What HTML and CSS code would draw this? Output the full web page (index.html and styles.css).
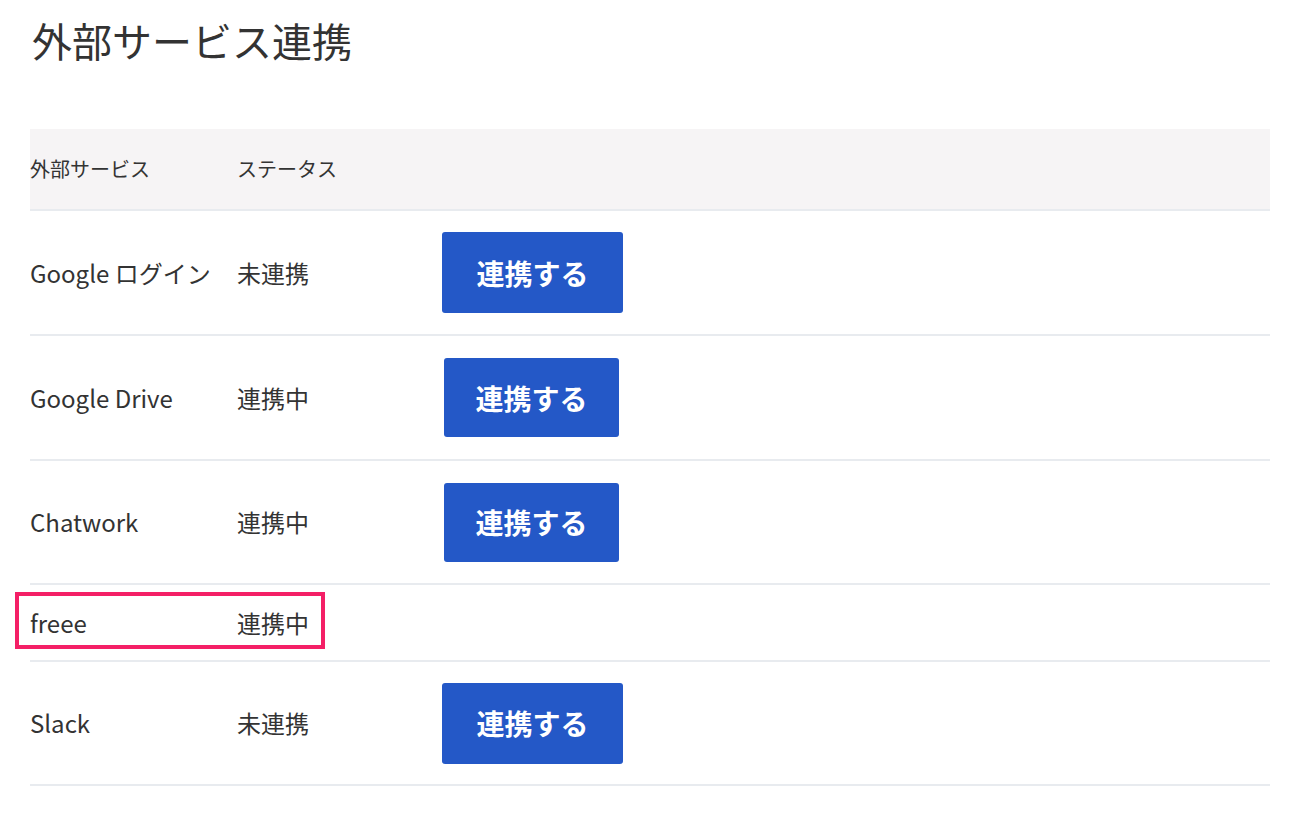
FILE: index.html
```html
<!DOCTYPE html>
<html lang="ja">
<head>
<meta charset="utf-8">
<title>外部サービス連携</title>
<link rel="stylesheet" href="styles.css">
</head>
<body>
<div class="page">
  <h1 class="title">外部サービス連携</h1>
  <div class="table">
    <div class="row row--head">
      <div class="cell cell--name">外部サービス</div>
      <div class="cell cell--status">ステータス</div>
    </div>
    <div class="row row--first">
      <div class="cell cell--name">Google ログイン</div>
      <div class="cell cell--status">未連携</div>
      <div class="cell cell--action"><button class="btn">連携する</button></div>
    </div>
    <div class="row row--mid">
      <div class="cell cell--name">Google Drive</div>
      <div class="cell cell--status">連携中</div>
      <div class="cell cell--action"><button class="btn btn--narrow">連携する</button></div>
    </div>
    <div class="row">
      <div class="cell cell--name">Chatwork</div>
      <div class="cell cell--status">連携中</div>
      <div class="cell cell--action"><button class="btn btn--narrow">連携する</button></div>
    </div>
    <div class="row row--short">
      <div class="cell cell--name">freee</div>
      <div class="cell cell--status">連携中</div>
      <div class="highlight"></div>
    </div>
    <div class="row">
      <div class="cell cell--name">Slack</div>
      <div class="cell cell--status">未連携</div>
      <div class="cell cell--action"><button class="btn">連携する</button></div>
    </div>
  </div>
</div>
</body>
</html>
```

FILE: styles.css
```css
html, body {
  margin: 0;
  padding: 0;
  background: #ffffff;
}

body {
  font-family: "Noto Sans CJK JP", "Noto Sans", sans-serif;
  color: #333333;
}

.page {
  padding: 0 29px 0 30px;
}

.title {
  margin: 16px 0 65px 2px;
  font-size: 40px;
  line-height: 48px;
  font-weight: 400;
  color: #333333;
  letter-spacing: 0;
}

.table {
  display: flex;
  flex-direction: column;
}

.row {
  position: relative;
  display: flex;
  align-items: center;
  height: 122px;
  border-bottom: 2px solid #e8ebef;
}

.row--first {
  height: 123px;
}

.row--mid {
  height: 123px;
}

.row--short {
  height: 75px;
}

.row--head {
  height: 80px;
  background: #f6f4f5;
}

.cell {
  font-size: 24px;
  line-height: 32px;
  color: #333333;
}

.row--head .cell {
  font-size: 20px;
  line-height: 28px;
  color: #333333;
}

.cell--name {
  width: 207px;
  flex: none;
}

.cell--status {
  width: 205px;
  flex: none;
}

.cell--action {
  display: flex;
  align-items: center;
}

.btn {
  width: 181px;
  height: 81px;
  border: 0;
  border-radius: 3px;
  background: #2458c7;
  color: #ffffff;
  font-family: "Noto Sans CJK JP", "Noto Sans", sans-serif;
  font-size: 28px;
  font-weight: 700;
  padding: 0;
  cursor: pointer;
}

.btn--narrow {
  width: 175px;
  height: 79px;
  margin-left: 2px;
}

.highlight {
  position: absolute;
  left: -15px;
  top: 7px;
  width: 310px;
  height: 57px;
  box-sizing: border-box;
  border: 4px solid #f41f66;
  pointer-events: none;
}
```
